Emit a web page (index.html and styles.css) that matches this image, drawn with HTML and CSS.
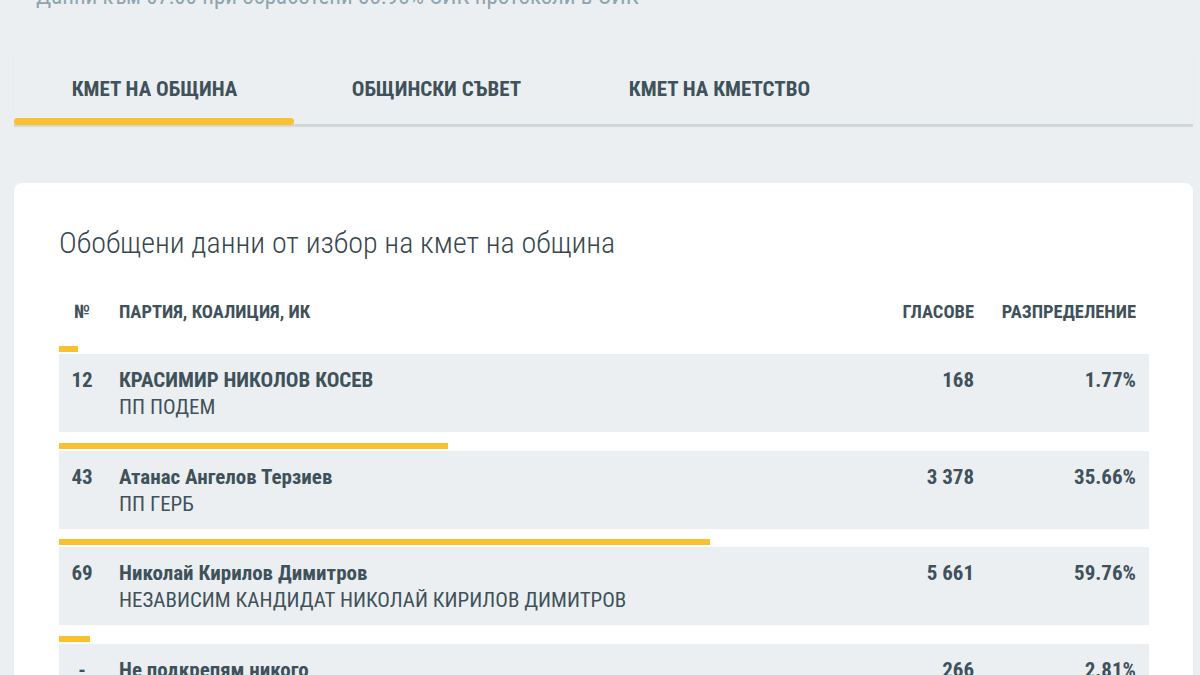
FILE: index.html
```html
<!DOCTYPE html>
<html lang="bg">
<head>
<meta charset="utf-8">
<title>Резултати</title>
<link rel="stylesheet" href="styles.css">
</head>
<body>
<div class="page">
  <p class="status">Данни към 07:00 при обработени 85.95% СИК протоколи в ОИК</p>
  <nav class="tabs">
    <div class="tab active">КМЕТ НА ОБЩИНА</div>
    <div class="tab">ОБЩИНСКИ СЪВЕТ</div>
    <div class="tab">КМЕТ НА КМЕТСТВО</div>
  </nav>
  <section class="card">
    <h2 class="card-title">Обобщени данни от избор на кмет на община</h2>
    <div class="thead">
      <span class="c-num">№</span>
      <span class="c-name">ПАРТИЯ, КОАЛИЦИЯ, ИК</span>
      <span class="c-votes">ГЛАСОВЕ</span>
      <span class="c-pct">РАЗПРЕДЕЛЕНИЕ</span>
    </div>
    <div class="entry">
      <div class="bar" style="width:1.77%"></div>
      <div class="row">
        <span class="c-num">12</span>
        <div class="c-name"><div class="cand">КРАСИМИР НИКОЛОВ КОСЕВ</div><div class="party">ПП ПОДЕМ</div></div>
        <span class="c-votes">168</span>
        <span class="c-pct">1.77%</span>
      </div>
    </div>
    <div class="entry">
      <div class="bar" style="width:35.66%"></div>
      <div class="row">
        <span class="c-num">43</span>
        <div class="c-name"><div class="cand">Атанас Ангелов Терзиев</div><div class="party">ПП ГЕРБ</div></div>
        <span class="c-votes">3 378</span>
        <span class="c-pct">35.66%</span>
      </div>
    </div>
    <div class="entry">
      <div class="bar" style="width:59.76%"></div>
      <div class="row">
        <span class="c-num">69</span>
        <div class="c-name"><div class="cand">Николай Кирилов Димитров</div><div class="party">НЕЗАВИСИМ КАНДИДАТ НИКОЛАЙ КИРИЛОВ ДИМИТРОВ</div></div>
        <span class="c-votes">5 661</span>
        <span class="c-pct">59.76%</span>
      </div>
    </div>
    <div class="entry">
      <div class="bar" style="width:2.81%"></div>
      <div class="row">
        <span class="c-num">-</span>
        <div class="c-name"><div class="cand">Не подкрепям никого</div><div class="party">&nbsp;</div></div>
        <span class="c-votes">266</span>
        <span class="c-pct">2.81%</span>
      </div>
    </div>
  </section>
</div>
</body>
</html>
```
FILE: styles.css
```css
* { box-sizing: border-box; }
html, body { margin: 0; padding: 0; }
body {
  background: #eceff1;
  font-family: "Roboto Condensed", "Liberation Sans Narrow", "DejaVu Sans Condensed", Roboto, sans-serif;
  color: #37474f;
  overflow: hidden;
  height: 675px;
}
.page {
  padding: 0 7px 0 14px;
}
.status {
  margin: -16px 0 0 22px;
  font-size: 23px;
  line-height: 26px;
  color: #90a4ae;
}
.tabs {
  display: flex;
  margin-top: 44px;
  border-bottom: 2px solid #cfd6da;
  box-shadow: 0 1px 1px rgba(0,0,0,0.08);
}
.tab {
  width: 283px;
  height: 70px;
  display: flex;
  align-items: center;
  justify-content: center;
  font-weight: 700;
  font-size: 21px;
  color: #3f525b;
  position: relative;
}
.tab:first-child { width: 281px; }
.tab.active::after {
  content: "";
  position: absolute;
  left: 0;
  right: 1px;
  bottom: -1px;
  height: 7px;
  border-radius: 4px;
  background: #fbc02d;
}
.card {
  margin-top: 57px;
  background: #fff;
  border-radius: 8px;
  padding: 40px 44px 40px 45px;
  box-shadow: 0 1px 2px rgba(0,0,0,0.05);
}
.card-title {
  margin: 0;
  font-weight: 300;
  font-size: 30px;
  line-height: 40px;
  color: #37474f;
}
.thead, .row {
  display: flex;
  align-items: flex-start;
}
.thead {
  margin-top: 32px;
  height: 34px;
  align-items: center;
  font-size: 18.5px;
  font-weight: 700;
  color: #3f525b;
  margin-bottom: 17px;
}
.c-num { width: 46px; text-align: center; flex: none; }
.c-name { flex: 1; padding-left: 14px; }
.c-votes { width: 120px; text-align: right; flex: none; }
.c-pct { width: 175px; text-align: right; padding-right: 13px; flex: none; }
.entry { margin-bottom: 10.5px; }
.bar {
  height: 6px;
  background: #fbc02d;
  margin-bottom: 2px;
}
.row {
  background: #eceff1;
  height: 78px;
  padding-top: 13px;
  font-size: 21px;
  line-height: 27px;
}
.row .c-num, .row .c-votes, .row .c-pct, .cand { font-weight: 700; color: #3f525b; }
.party { color: #3f525b; font-weight: 400; }
```
